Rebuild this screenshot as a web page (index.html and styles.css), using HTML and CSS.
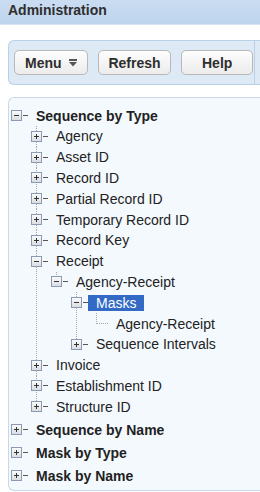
FILE: index.html
```html
<!DOCTYPE html>
<html lang="en">
<head>
  <meta charset="UTF-8">
  <title>Administration</title>
  <link rel="stylesheet" href="styles.css">
</head>
<body>

<div class="header">Administration</div>

<div class="toolbar">
  <button class="btn btn-menu">Menu
    <svg class="caret" width="8" height="8" viewBox="0 0 8 8"><rect x="0" y="0" width="8" height="2" fill="#555"/><polygon points="0,3 8,3 4,7.5" fill="#555"/></svg>
  </button>
  <button class="btn btn-refresh">Refresh</button>
  <button class="btn btn-help">Help</button>
  <span class="sep"></span>
</div>

<div class="tree-panel">
  <ul class="tree">
    <li class="top">
      <div class="row"><span class="toggle minus"></span><span class="dash"></span><span class="label">Sequence by Type</span></div>
      <ul class="sub">
        <li><div class="row"><span class="toggle plus"></span><span class="dash"></span><span class="label">Agency</span></div></li>
        <li><div class="row"><span class="toggle plus"></span><span class="dash"></span><span class="label">Asset ID</span></div></li>
        <li><div class="row"><span class="toggle plus"></span><span class="dash"></span><span class="label">Record ID</span></div></li>
        <li><div class="row"><span class="toggle plus"></span><span class="dash"></span><span class="label">Partial Record ID</span></div></li>
        <li><div class="row"><span class="toggle plus"></span><span class="dash"></span><span class="label">Temporary Record ID</span></div></li>
        <li><div class="row"><span class="toggle plus"></span><span class="dash"></span><span class="label">Record Key</span></div></li>
        <li>
          <div class="row"><span class="toggle minus"></span><span class="dash"></span><span class="label">Receipt</span></div>
          <ul class="sub">
            <li>
              <div class="row"><span class="toggle minus"></span><span class="dash"></span><span class="label">Agency-Receipt</span></div>
              <ul class="sub">
                <li>
                  <div class="row"><span class="toggle minus"></span><span class="dash"></span><span class="label selected">Masks</span></div>
                  <ul class="sub">
                    <li><div class="row"><span class="leaf"></span><span class="label">Agency-Receipt</span></div></li>
                  </ul>
                </li>
                <li><div class="row"><span class="toggle plus"></span><span class="dash"></span><span class="label">Sequence Intervals</span></div></li>
              </ul>
            </li>
          </ul>
        </li>
        <li><div class="row"><span class="toggle plus"></span><span class="dash"></span><span class="label">Invoice</span></div></li>
        <li><div class="row"><span class="toggle plus"></span><span class="dash"></span><span class="label">Establishment ID</span></div></li>
        <li><div class="row"><span class="toggle plus"></span><span class="dash"></span><span class="label">Structure ID</span></div></li>
      </ul>
    </li>
    <li class="top"><div class="row"><span class="toggle plus"></span><span class="dash"></span><span class="label">Sequence by Name</span></div></li>
    <li class="top"><div class="row"><span class="toggle plus"></span><span class="dash"></span><span class="label">Mask by Type</span></div></li>
    <li class="top"><div class="row"><span class="toggle plus"></span><span class="dash"></span><span class="label">Mask by Name</span></div></li>
  </ul>
</div>

</body>
</html>
```

FILE: styles.css
```css
body {
  margin: 0;
  font-family: "Liberation Sans", Arial, sans-serif;
  color: #222;
  background: #fff;
  overflow: hidden;
}

/* Titolo */
.header {
  height: 24px;
  line-height: 20px;
  padding-left: 8px;
  font-size: 14px;
  font-weight: bold;
  color: #2e2e2e;
  background: linear-gradient(#cadcf1, #bfd5ee);
  border-bottom: 1px solid #d6e4f4;
}

/* Barra pulsanti: continua oltre il bordo destro */
.toolbar {
  display: flex;
  align-items: center;
  gap: 10px;
  margin: 15px 0 0 8px;
  padding: 9px 5px;
  border: 1px solid #b9d0e9;
  border-right: none;
  border-radius: 6px 0 0 6px;
  background: #dee9f6;
}

.btn {
  display: flex;
  align-items: center;
  justify-content: center;
  gap: 7px;
  height: 25px;
  padding: 0;
  font-family: "Liberation Sans", Arial, sans-serif;
  font-size: 14px;
  font-weight: bold;
  color: #2e2e2e;
  border: 1px solid #b8b8b8;
  border-radius: 5px;
  background: linear-gradient(#fdfdfd, #ececec);
}

.btn-menu { width: 74px; }
.btn-refresh { width: 74px; }
.btn-help { width: 72px; }

.sep {
  align-self: stretch;
  width: 1px;
  margin: -9px 0 -9px -9px;
  background: #b9d0e9;
}

/* Albero */
.tree-panel {
  height: 387px;
  margin: 12px 0 0 8px;
  padding: 5px 0 0 2px;
  border: 1px solid #cad9ea;
  border-right: none;
  border-radius: 6px 0 0 6px;
  background: #f4f9fe;
}

ul {
  list-style: none;
  margin: 0;
  padding: 0;
}

ul.sub {
  padding-left: 20px;
}

li {
  position: relative;
}

li.top {
  margin-top: 2.2px;
}

ul.sub > li::before {
  content: "";
  position: absolute;
  left: 5px;
  top: 0;
  bottom: 0;
  width: 1px;
  background: linear-gradient(#a8a8a8 50%, transparent 50%) 0 0 / 1px 2px repeat-y;
}

ul.sub > li:last-child::before {
  bottom: auto;
  height: 10.4px;
}

.row {
  display: flex;
  align-items: center;
  height: 20.8px;
  font-size: 14px;
  white-space: nowrap;
}

.toggle {
  position: relative;
  flex: none;
  box-sizing: border-box;
  width: 11px;
  height: 11px;
  border: 1px solid #8b9bb4;
}

.toggle.minus {
  background:
    linear-gradient(#333, #333) center / 5px 1px no-repeat,
    linear-gradient(#fbfbfb, #dadde2);
}

.toggle.plus {
  background:
    linear-gradient(#333, #333) center / 5px 1px no-repeat,
    linear-gradient(#333, #333) center / 1px 5px no-repeat,
    linear-gradient(#fbfbfb, #dadde2);
}

.dash {
  flex: none;
  width: 5px;
  height: 1px;
  margin-left: 1px;
  background: #555;
}

.leaf {
  flex: none;
  width: 11px;
  height: 1px;
  margin-left: 6px;
  background: linear-gradient(to right, #a8a8a8 50%, transparent 50%) 0 0 / 2px 1px repeat-x;
}

.label {
  height: 16px;
  line-height: 16px;
  padding: 0 8px;
}

.top > .row .label {
  font-weight: bold;
}

.selected {
  background: #326ac6;
  color: #fff;
}
```
